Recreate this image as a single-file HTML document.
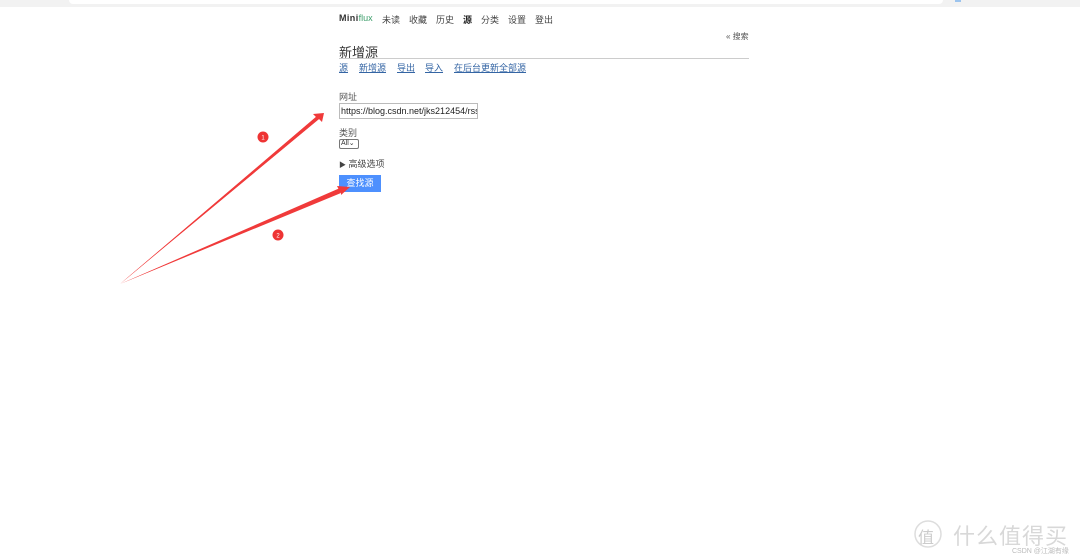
<!DOCTYPE html>
<html><head><meta charset="utf-8"><style>
*{margin:0;padding:0;box-sizing:border-box}
body{width:1080px;height:559px;background:#fff;position:relative;overflow:hidden;font-family:"Liberation Sans","Noto Sans CJK SC",sans-serif;color:#333}
.a{position:absolute;white-space:nowrap}
.n{position:absolute;top:13px;font-size:9px;color:#444}
.l{position:absolute;top:61px;font-size:9px;color:#3465a4;text-decoration:underline}
</style></head><body>
<div class="a" style="left:0;top:0;width:1080px;height:7px;background:#f2f2f2"></div>
<div class="a" style="left:69px;top:0;width:874px;height:4px;background:#fff;border-radius:0 0 4px 4px"></div>
<div class="a" style="left:955px;top:0;width:6px;height:2px;background:#9cc4ee"></div>

<div class="n" style="left:339px"><b style="color:#333;letter-spacing:.4px">Mini</b><span style="color:#3d9e6b">flux</span></div>
<div class="n" style="left:382px">未读</div>
<div class="n" style="left:409px">收藏</div>
<div class="n" style="left:436px">历史</div>
<div class="n" style="left:463px;font-weight:bold;color:#222">源</div>
<div class="n" style="left:481px">分类</div>
<div class="n" style="left:508px">设置</div>
<div class="n" style="left:535px">登出</div>
<div class="a" style="left:726px;top:31px;font-size:8px;color:#555">« 搜索</div>
<div class="a" style="left:339px;top:42px;font-size:13px;color:#333">新增源</div>
<div class="a" style="left:339px;top:58px;width:410px;height:1px;background:#ccc"></div>
<div class="l" style="left:339px">源</div>
<div class="l" style="left:359px">新增源</div>
<div class="l" style="left:397px">导出</div>
<div class="l" style="left:425px">导入</div>
<div class="l" style="left:454px">在后台更新全部源</div>
<div class="a" style="left:339px;top:90px;font-size:9px;color:#555">网址</div>
<div class="a" style="left:339px;top:103px;width:139px;height:16px;border:1px solid #bbb;font-size:9px;padding:2px 1px;overflow:hidden;color:#222">https://blog.csdn.net/jks212454/rss</div>
<div class="a" style="left:339px;top:126px;font-size:9px;color:#555">类别</div>
<div class="a" style="left:339px;top:139px;width:20px;height:10px;border:1px solid #777;border-radius:2px;font-size:7px;line-height:8px;padding-left:1px">All⌄</div>
<div class="a" style="left:339px;top:157px;font-size:9px;color:#444"><span style="font-size:7px">▶</span> 高级选项</div>
<div class="a" style="left:339px;top:175px;width:42px;height:17px;background:#4d90fe;color:#fff;font-size:9px;line-height:17px;text-align:center">查找源</div>

<svg class="a" style="left:0;top:0" width="1080" height="559">
<polygon points="120,284 316,117 313,114 324,113 322,122 319,119" fill="#f03a3a"/>
<polygon points="120,284 339,190 337,186 350,187 341,195 341,192" fill="#f03a3a"/>
<polygon points="120,284 317,116 319,119" fill="#f03a3a"/>
<polygon points="120,284 340,188 341,193" fill="#f03a3a"/>
<circle cx="263" cy="137" r="5.5" fill="#ee3434"/><text x="263" y="139.5" font-size="6" fill="#fff" text-anchor="middle" font-family="Liberation Sans">1</text>
<circle cx="278" cy="235" r="5.5" fill="#ee3434"/><text x="278" y="237.5" font-size="6" fill="#fff" text-anchor="middle" font-family="Liberation Sans">2</text>
<circle cx="928" cy="534" r="13" fill="none" stroke="#ddd" stroke-width="1.5"/>
</svg>
<div class="a" style="left:918px;top:524px;font-size:16px;color:#ccc">值</div>
<div class="a" style="left:953px;top:519px;font-size:22px;color:#d8d8d8;letter-spacing:1px">什么值得买</div>
<div class="a" style="left:1012px;top:546px;font-size:7px;color:#bbb">CSDN @江湖有缘</div>
</body></html>
